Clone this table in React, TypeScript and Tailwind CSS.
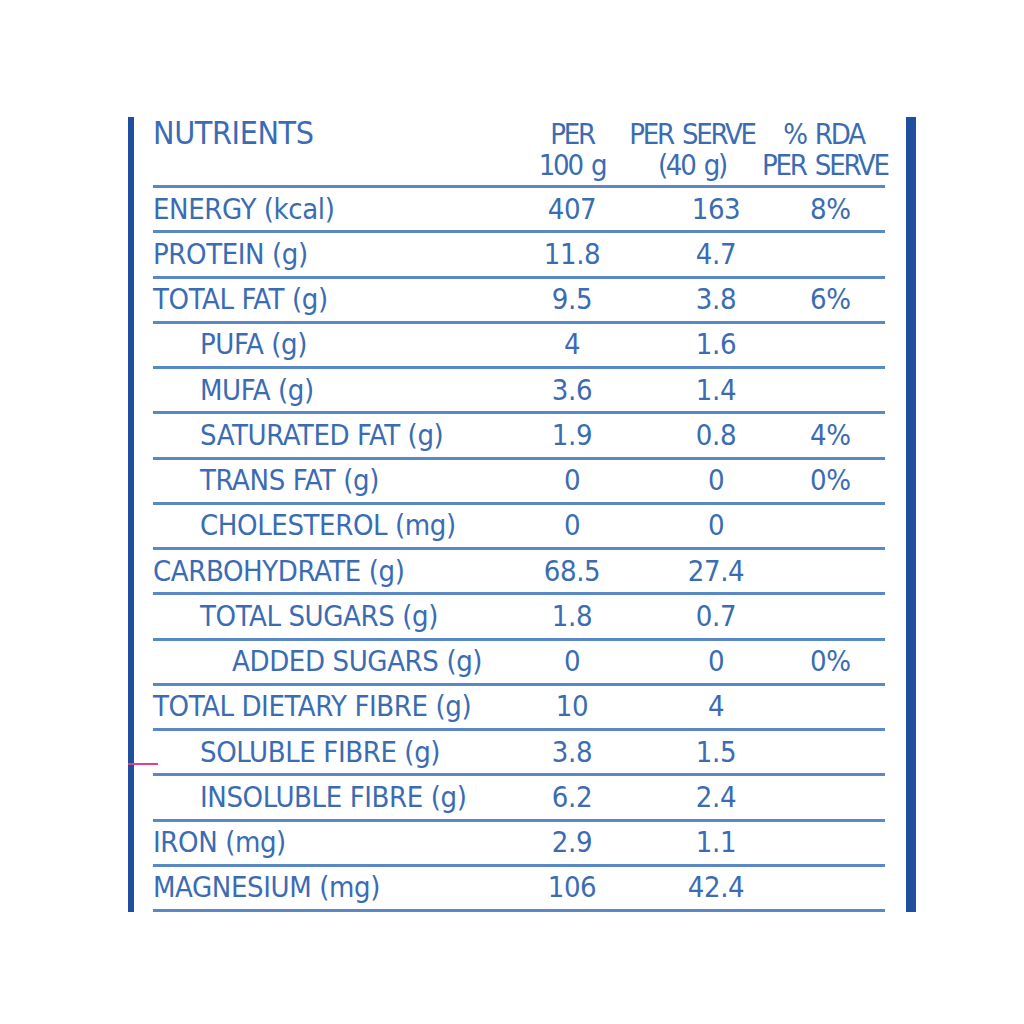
const ROWS: { name: string; indent?: 0 | 1 | 2; per100: string; serve: string; rda?: string }[] = [
  { name: "ENERGY (kcal)", per100: "407", serve: "163", rda: "8%" },
  { name: "PROTEIN (g)", per100: "11.8", serve: "4.7" },
  { name: "TOTAL FAT (g)", per100: "9.5", serve: "3.8", rda: "6%" },
  { name: "PUFA (g)", indent: 1, per100: "4", serve: "1.6" },
  { name: "MUFA (g)", indent: 1, per100: "3.6", serve: "1.4" },
  { name: "SATURATED FAT (g)", indent: 1, per100: "1.9", serve: "0.8", rda: "4%" },
  { name: "TRANS FAT (g)", indent: 1, per100: "0", serve: "0", rda: "0%" },
  { name: "CHOLESTEROL (mg)", indent: 1, per100: "0", serve: "0" },
  { name: "CARBOHYDRATE (g)", per100: "68.5", serve: "27.4" },
  { name: "TOTAL SUGARS (g)", indent: 1, per100: "1.8", serve: "0.7" },
  { name: "ADDED SUGARS (g)", indent: 2, per100: "0", serve: "0", rda: "0%" },
  { name: "TOTAL DIETARY FIBRE (g)", per100: "10", serve: "4" },
  { name: "SOLUBLE FIBRE (g)", indent: 1, per100: "3.8", serve: "1.5" },
  { name: "INSOLUBLE FIBRE (g)", indent: 1, per100: "6.2", serve: "2.4" },
  { name: "IRON (mg)", per100: "2.9", serve: "1.1" },
  { name: "MAGNESIUM (mg)", per100: "106", serve: "42.4" },
];

const indentClass = ["pl-0", "pl-[47px]", "pl-[79px]"];

export default function App() {
  return (
    <div
      className="min-h-screen w-full bg-white pt-[117px] pl-[128px] relative text-[#3b6cb3]"
      style={{ fontFamily: '"DejaVu Sans Condensed", "Liberation Sans Narrow", "DejaVu Sans", sans-serif' }}
    >
      {/* pink tick on the left edge */}
      <div className="absolute left-[128px] top-[763px] w-[30px] h-[2px] bg-[#e0408f]" />

      <div className="flex w-fit">
        <div className="w-[6px] bg-[#1f4f9f]" />

        <div className="ml-[19px] w-[732px] font-stretch-condensed">
          {/* header */}
          <div className="grid grid-cols-[369px_100px_140px_123px] h-[71px] border-b-[3px] border-[#5a87c6] text-[29px] leading-[31px] tracking-[-2.2px] [word-spacing:3px]">
            <div className="text-[32px] tracking-[-0.4px] [word-spacing:0px] pt-[1px]">NUTRIENTS</div>
            <div className="text-center pt-[2px]">
              PER
              <br />
              100 g
            </div>
            <div className="text-center whitespace-nowrap pt-[2px]">
              PER SERVE
              <br />
              (40 g)
            </div>
            <div className="text-center whitespace-nowrap pt-[2px]">
              % RDA
              <br />
              PER SERVE
            </div>
          </div>

          {ROWS.map((r) => (
            <div
              key={r.name}
              className="grid grid-cols-[369px_100px_188px_75px] items-center h-[45.25px] border-b-[3px] border-[#5a87c6] text-[29px] leading-none tracking-[-0.4px]"
            >
              <div className={`${indentClass[r.indent ?? 0]} whitespace-nowrap`}>{r.name}</div>
              <div className="text-center">{r.per100}</div>
              <div className="text-center">{r.serve}</div>
              <div className="text-center pr-[39px]">{r.rda ?? ""}</div>
            </div>
          ))}
        </div>

        <div className="ml-[21px] w-[10px] bg-[#1f4f9f]" />
      </div>
    </div>
  );
}
